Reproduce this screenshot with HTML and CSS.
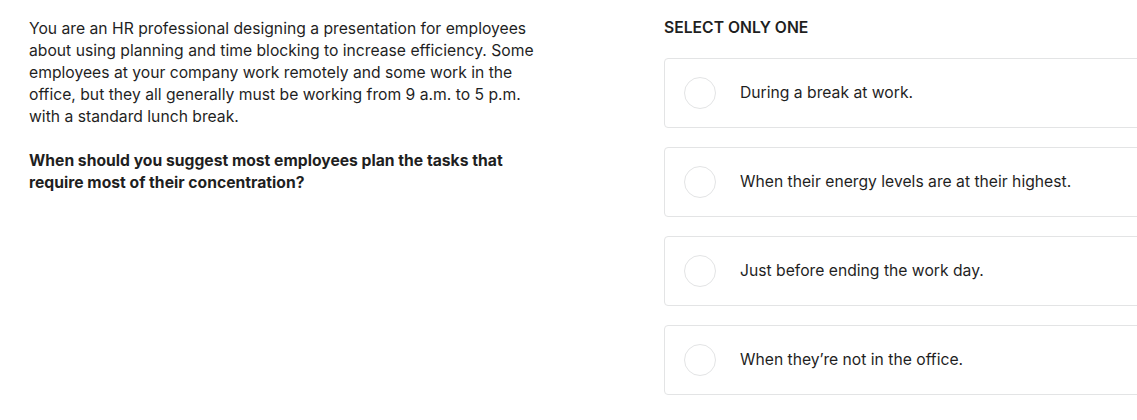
FILE: index.html
```html
<!DOCTYPE html>
<html lang="en">
<head>
<meta charset="utf-8">
<title>Question</title>
<link rel="stylesheet" href="styles.css">
</head>
<body>
<div class="page">
  <section class="prompt">
    <p class="scenario">You are an HR professional designing a presentation for employees about using planning and time blocking to increase efficiency. Some employees at your company work remotely and some work in the office, but they all generally must be working from 9 a.m. to 5 p.m. with a standard lunch break.</p>
    <p class="question">When should you suggest most employees plan the tasks that require most of their concentration?</p>
  </section>
  <section class="answers">
    <div class="label">SELECT ONLY ONE</div>
    <div class="options">
      <label class="option"><span class="radio"></span><span class="text">During a break at work.</span></label>
      <label class="option"><span class="radio"></span><span class="text">When their energy levels are at their highest.</span></label>
      <label class="option"><span class="radio"></span><span class="text">Just before ending the work day.</span></label>
      <label class="option"><span class="radio"></span><span class="text">When they’re not in the office.</span></label>
    </div>
  </section>
</div>
</body>
</html>
```
FILE: styles.css
```css
html, body {
  margin: 0;
  padding: 0;
  background: #ffffff;
  overflow: hidden;
}
body {
  font-family: Inter, "Noto Sans", "Liberation Sans", sans-serif;
  color: #1f1f1f;
  font-size: 15.7px;
  line-height: 22px;
}
.page {
  display: flex;
  padding: 17px 0 0 29px;
  width: 1300px;
}
.prompt {
  width: 516px;
  flex: none;
}
.scenario, .question {
  margin: 0;
}
.scenario {
  padding-top: 1px;
}
.question {
  margin-top: 22px;
  font-weight: 700;
}
.answers {
  margin-left: 119px;
  flex: none;
  width: 560px;
}
.label {
  font-weight: 600;
  line-height: 22px;
}
.options {
  margin-top: 19px;
  display: flex;
  flex-direction: column;
  gap: 19px;
}
.option {
  display: flex;
  align-items: center;
  height: 70px;
  box-sizing: border-box;
  border: 1px solid #e3e4e5;
  border-radius: 4px;
  padding-left: 19px;
}
.radio {
  width: 32px;
  height: 32px;
  box-sizing: border-box;
  border: 1px solid #e3e4e5;
  border-radius: 50%;
  flex: none;
}
.text {
  margin-left: 24px;
}
```
